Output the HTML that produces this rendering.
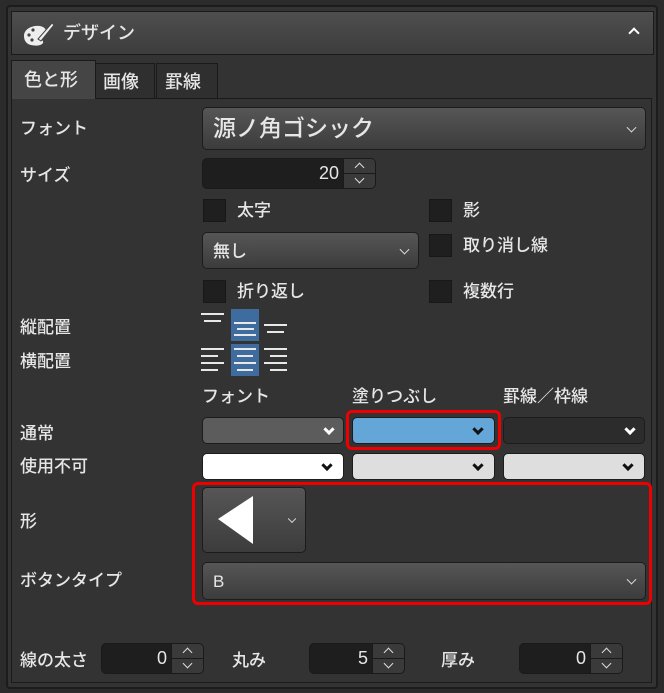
<!DOCTYPE html><html><head><meta charset="utf-8"><style>
*{box-sizing:border-box;margin:0;padding:0}
body{width:664px;height:693px;background:#2b2b2b;position:relative;overflow:hidden;font-family:"Liberation Sans","Noto Sans CJK JP",sans-serif;color:#e6e6e6}
.a{position:absolute}
.t{position:absolute;font-size:17px;line-height:20px;white-space:nowrap;font-weight:500}
.dd{position:absolute;border:1px solid #1c1c1c;border-radius:5px;background:linear-gradient(#565656,#3c3c3c)}
.chev{position:absolute;right:10px;top:50%;width:7px;height:7px;border-right:1.5px solid #ddd;border-bottom:1.5px solid #ddd;transform:translateY(-70%) rotate(45deg)}
.cv{position:absolute;right:12px;top:50%;width:8px;height:8px;border-right:3px solid #111;border-bottom:3px solid #111;transform:translateY(-70%) rotate(45deg)}
.cb{position:absolute;width:23px;height:23px;background:#1f1f1f;border:1px solid #181818}
.sp{position:absolute;height:31px;border:1px solid #1a1a1a;border-radius:5px;background:#1e1e1e;overflow:hidden}
.sp .n{position:absolute;right:36px;top:4px;font-size:18px}
.sp .ar{position:absolute;right:0;top:0;width:32px;height:100%;background:#3a3a3a;border-left:1px solid #1a1a1a}
.sp .ar:after{content:"";position:absolute;left:0;right:0;top:14px;border-top:1px solid #1a1a1a}
.up,.dn{position:absolute;left:12px;width:7px;height:7px;border-left:1.5px solid #ddd;border-top:1.5px solid #ddd;transform:rotate(45deg)}
.up{top:5px}.dn{top:16px;transform:rotate(225deg)}
.ln{position:absolute;height:2px;background:#e8e8e8}
</style></head><body>
<div class="a" style="left:6px;top:5px;width:652px;height:684px;border:2px solid #1c1c1c;border-radius:4px;background:#333"></div>
<div class="a" style="left:11px;top:11px;width:643px;height:44px;border:1px solid #1a1a1a;background:linear-gradient(#4e4e4e,#3d3d3d)"></div>
<svg class="a" style="left:21px;top:21px" width="36" height="26" viewBox="0 0 36 26"><path d="M3 15c0-7 8-11 16-10 5 1 7 4 5 7-2 2-5 1-5 4 0 3 4 3 3 6-2 3-8 3-12 2C5 23 3 19 3 15z" fill="#eee"/><circle cx="8" cy="14" r="1.6" fill="#444"/><circle cx="12" cy="9" r="1.6" fill="#444"/><circle cx="11" cy="19" r="1.6" fill="#444"/><path d="M17 18l14-16 2 2-13 16z" fill="#eee" stroke="#444" stroke-width="1"/></svg>
<div class="t" style="left:63px;top:23px;font-size:18px">デザイン</div>
<div class="a" style="left:630px;top:29px;width:8px;height:8px;border-left:2.5px solid #fff;border-top:2.5px solid #fff;transform:rotate(45deg)"></div>
<div class="a" style="left:11px;top:98px;width:641px;height:585px;border:1px solid #1a1a1a;background:#333"></div>
<div class="a" style="left:11px;top:60px;width:85px;height:39px;background:#454545;border:1px solid #1a1a1a;border-bottom:none"></div>
<div class="t" style="left:24px;top:70px;font-size:18px">色と形</div>
<div class="a" style="left:95px;top:63px;width:60px;height:36px;background:#2f2f2f;border:1px solid #1a1a1a"></div>
<div class="t" style="left:103px;top:72px;font-size:18px">画像</div>
<div class="a" style="left:156px;top:63px;width:62px;height:36px;background:#2f2f2f;border:1px solid #1a1a1a"></div>
<div class="t" style="left:165px;top:72px;font-size:18px">罫線</div>

<div class="t" style="left:20px;top:119px">フォント</div>
<div class="t" style="left:20px;top:166px">サイズ</div>
<div class="t" style="left:20px;top:318px">縦配置</div>
<div class="t" style="left:20px;top:352px">横配置</div>
<div class="t" style="left:20px;top:424px">通常</div>
<div class="t" style="left:20px;top:457px">使用不可</div>
<div class="t" style="left:20px;top:512px">形</div>
<div class="t" style="left:20px;top:571px">ボタンタイプ</div>

<div class="dd" style="left:202px;top:107px;width:444px;height:43px"><div class="t" style="left:10px;top:6px;font-size:23px;line-height:28px">源ノ角ゴシック</div><div class="chev"></div></div>
<div class="sp" style="left:202px;top:158px;width:174px"><div class="n">20</div><div class="ar"><div class="up"></div><div class="dn"></div></div></div>

<div class="cb" style="left:203px;top:199px"></div><div class="t" style="left:237px;top:201px">太字</div>
<div class="cb" style="left:429px;top:199px"></div><div class="t" style="left:463px;top:201px">影</div>
<div class="dd" style="left:202px;top:232px;width:217px;height:37px"><div class="t" style="left:10px;top:9px">無し</div><div class="chev"></div></div>
<div class="cb" style="left:429px;top:234px"></div><div class="t" style="left:463px;top:236px">取り消し線</div>
<div class="cb" style="left:203px;top:280px"></div><div class="t" style="left:237px;top:282px">折り返し</div>
<div class="cb" style="left:429px;top:280px"></div><div class="t" style="left:463px;top:282px">複数行</div>

<div class="a" style="left:231px;top:309px;width:28px;height:32px;background:#3f6c9e"></div>
<div class="ln" style="left:201px;top:313px;width:23px;height:1.5px"></div><div class="ln" style="left:204px;top:320px;width:17px;height:1.5px"></div>
<div class="ln" style="left:234px;top:322px;width:22px;height:1.5px"></div><div class="ln" style="left:237px;top:328px;width:17px;height:1.5px"></div><div class="ln" style="left:234px;top:334px;width:22px;height:1.5px"></div>
<div class="ln" style="left:264px;top:324px;width:23px;height:1.5px"></div><div class="ln" style="left:267px;top:331px;width:17px;height:1.5px"></div>
<div class="a" style="left:231px;top:344px;width:28px;height:32px;background:#3f6c9e"></div>
<div class="ln" style="left:201px;top:348px;width:23px;height:1.5px"></div><div class="ln" style="left:201px;top:355px;width:17px;height:1.5px"></div><div class="ln" style="left:201px;top:362px;width:23px;height:1.5px"></div><div class="ln" style="left:201px;top:369px;width:17px;height:1.5px"></div>
<div class="ln" style="left:234px;top:348px;width:22px;height:1.5px"></div><div class="ln" style="left:237px;top:355px;width:16px;height:1.5px"></div><div class="ln" style="left:234px;top:362px;width:22px;height:1.5px"></div><div class="ln" style="left:237px;top:369px;width:16px;height:1.5px"></div>
<div class="ln" style="left:264px;top:348px;width:23px;height:1.5px"></div><div class="ln" style="left:270px;top:355px;width:17px;height:1.5px"></div><div class="ln" style="left:264px;top:362px;width:23px;height:1.5px"></div><div class="ln" style="left:270px;top:369px;width:17px;height:1.5px"></div>

<div class="t" style="left:202px;top:387px">フォント</div>
<div class="t" style="left:352px;top:387px">塗りつぶし</div>
<div class="t" style="left:503px;top:387px">罫線／枠線</div>

<div class="a" style="left:346px;top:410px;width:155px;height:40px;border:3px solid #e00;border-radius:6px"></div>
<div class="dd" style="left:202px;top:417px;width:142px;height:27px;background:#5c5c5c"><div class="chev" style="border-width:3px;width:8px;height:8px;border-color:#fff"></div></div>
<div class="dd" style="left:352px;top:417px;width:143px;height:27px;background:#64a6d8"><div class="cv"></div></div>
<div class="dd" style="left:503px;top:417px;width:142px;height:27px;background:#2c2c2c"><div class="chev" style="border-width:3px;width:8px;height:8px;border-color:#fff"></div></div>
<div class="dd" style="left:202px;top:453px;width:142px;height:27px;background:#fff"><div class="cv"></div></div>
<div class="dd" style="left:352px;top:453px;width:143px;height:27px;background:#dedede"><div class="cv"></div></div>
<div class="dd" style="left:503px;top:453px;width:142px;height:27px;background:#dedede"><div class="cv"></div></div>

<div class="a" style="left:192px;top:482px;width:460px;height:123px;border:3px solid #e00;border-radius:6px"></div>
<div class="dd" style="left:202px;top:487px;width:104px;height:66px"><svg class="a" style="left:12px;top:6px" width="42" height="52"><path d="M38 2V50L3 25Z" fill="#fff"/></svg><div class="chev" style="right:10px;width:6px;height:6px"></div></div>
<div class="dd" style="left:202px;top:562px;width:444px;height:38px"><div class="t" style="left:10px;top:9px">B</div><div class="chev"></div></div>

<div class="t" style="left:20px;top:651px">線の太さ</div>
<div class="sp" style="left:101px;top:643px;width:103px"><div class="n">0</div><div class="ar"><div class="up"></div><div class="dn"></div></div></div>
<div class="t" style="left:232px;top:651px">丸み</div>
<div class="sp" style="left:309px;top:643px;width:96px"><div class="n">5</div><div class="ar"><div class="up"></div><div class="dn"></div></div></div>
<div class="t" style="left:441px;top:651px">厚み</div>
<div class="sp" style="left:519px;top:643px;width:104px"><div class="n">0</div><div class="ar"><div class="up"></div><div class="dn"></div></div></div>
</body></html>
